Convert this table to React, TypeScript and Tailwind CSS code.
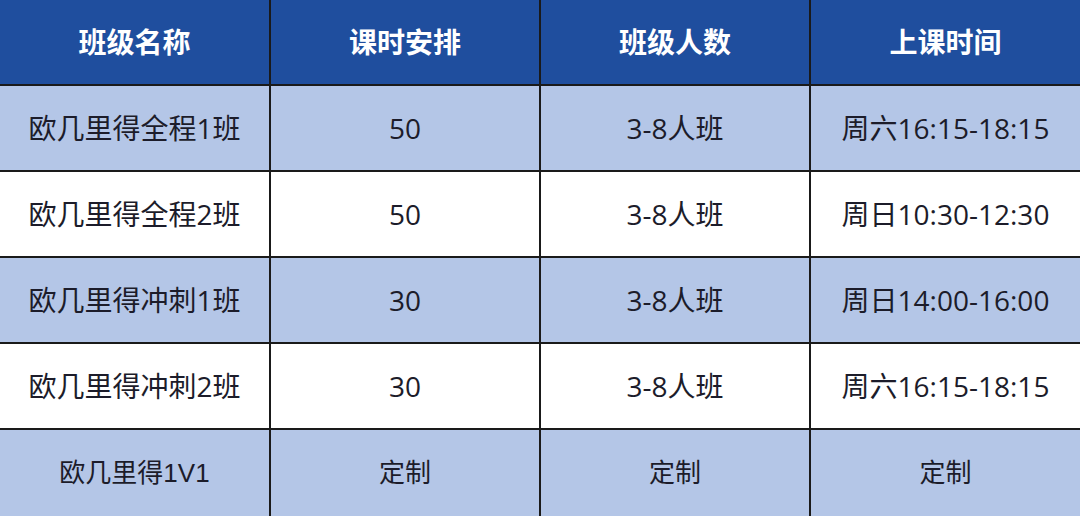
import React from 'react';

/**
 * 欧几里得班级安排表
 */
const HEADERS = ['班级名称', '课时安排', '班级人数', '上课时间'];

const ROWS = [
  ['欧几里得全程1班', '50', '3-8人班', '周六16:15-18:15'],
  ['欧几里得全程2班', '50', '3-8人班', '周日10:30-12:30'],
  ['欧几里得冲刺1班', '30', '3-8人班', '周日14:00-16:00'],
  ['欧几里得冲刺2班', '30', '3-8人班', '周六16:15-18:15'],
];

const LAST_ROW = ['欧几里得1V1', '定制', '定制', '定制'];

export default function App() {
  return (
    <div
      className="w-[1080px] h-[516px] overflow-hidden bg-white"
      style={{ fontFamily: '"Open Sans", "Noto Sans CJK SC", sans-serif' }}
    >
      <div className="grid grid-cols-[271px_270px_270px_269px] grid-rows-[repeat(6,86px)] border-r border-b border-[#6b7280]">
        {/* 表头 */}
        {HEADERS.map((h, i) => (
          <div
            key={h}
            className={`flex items-center justify-center bg-[#1f4e9e] text-white text-[28px] font-bold border-b-2 border-[#1a1a1a] ${i < 3 ? 'border-r-2' : ''}`}
          >
            {h}
          </div>
        ))}

        {/* 班级行 */}
        {ROWS.map((row, r) =>
          row.map((cell, i) => (
            <div
              key={`${r}-${i}`}
              className={`flex items-center justify-center text-[28px] text-[#1c1c2a] border-b-2 border-[#1a1a1a] ${i < 3 ? 'border-r-2' : ''} ${r % 2 === 0 ? 'bg-[#b4c6e7]' : 'bg-white'}`}
            >
              {cell}
            </div>
          ))
        )}

        {/* 1V1 */}
        {LAST_ROW.map((cell, i) => (
          <div
            key={`last-${i}`}
            className={`flex items-center justify-center bg-[#b4c6e7] text-[26px] text-[#1c1c2a] border-[#1a1a1a] ${i < 3 ? 'border-r-2' : ''}`}
            style={{ fontFamily: '"Liberation Sans", "Noto Sans CJK SC", sans-serif' }}
          >
            {cell}
          </div>
        ))}
      </div>
    </div>
  );
}
